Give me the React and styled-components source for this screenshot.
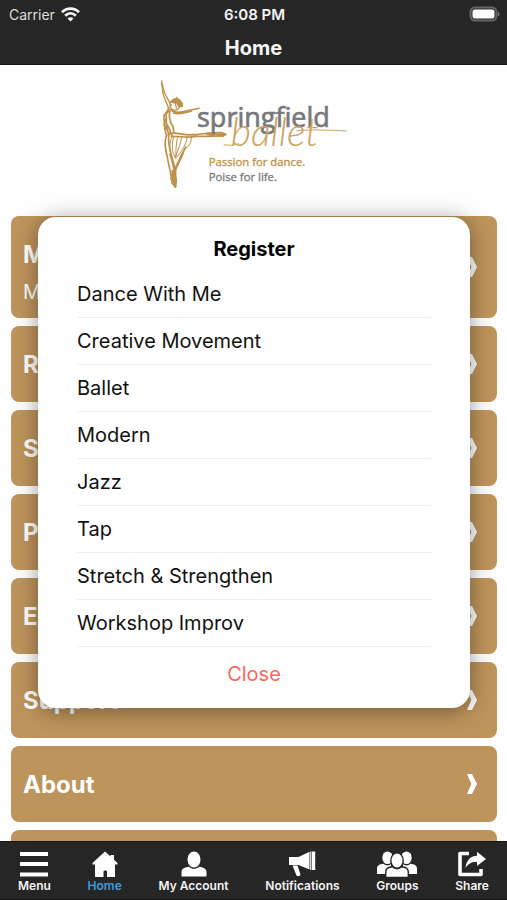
import React from "react";
import styled, { createGlobalStyle } from "styled-components";

const GlobalStyle = createGlobalStyle`
  * { box-sizing: border-box; }
  body {
    margin: 0;
    background: #fefefe;
    font-family: Inter, "Liberation Sans", sans-serif;
  }
  button { font: inherit; border: 0; background: none; padding: 0; cursor: pointer; }
`;

const Screen = styled.div`
  position: relative;
  height: 100vh;
  display: flex;
  flex-direction: column;
  overflow: hidden;
`;

const Header = styled.header`
  flex: none;
  background: #262626;
  color: #f6f6f6;
  border-bottom: 1px solid #161616;
`;

const StatusBar = styled.div`
  display: grid;
  grid-template-columns: 1fr auto 1fr;
  align-items: center;
  height: 28px;
  padding: 0 7px 0 9px;
  font-size: 14px;
`;

const Carrier = styled.div`
  display: flex;
  align-items: center;
  gap: 6px;
  color: #dedede;
`;

const Clock = styled.time`
  font-size: 15px;
  font-weight: 600;
`;

const BatterySlot = styled.div`
  display: flex;
  justify-content: flex-end;
`;

const PageTitle = styled.h1`
  margin: 0;
  padding-top: 5px;
  height: 36px;
  line-height: 31px;
  font-size: 20px;
  font-weight: 700;
  text-align: center;
`;

const Content = styled.main`
  flex: 1;
  min-height: 0;
  overflow: hidden;
  padding: 10px 10px 0 11px;
`;

const LogoBox = styled.div`
  display: flex;
  justify-content: center;
  height: 141px;
`;

const CardList = styled.div`
  display: flex;
  flex-direction: column;
  gap: 8px;
`;

const Card = styled.button`
  display: flex;
  align-items: center;
  justify-content: space-between;
  width: 100%;
  min-height: ${(p) => (p.$tall ? 102 : 76)}px;
  padding: 0 20px 0 12px;
  border-radius: 8px;
  background: #bd945b;
  color: #fff;
  text-align: left;
`;

const CardText = styled.span`
  display: flex;
  flex-direction: column;
  gap: 8px;
  padding-top: ${(p) => (p.$tall ? 12 : 2)}px;
`;

const CardTitle = styled.span`
  font-size: 24px;
  line-height: 30px;
  font-weight: 700;
`;

const CardNote = styled.span`
  font-size: 20px;
  line-height: 28px;
`;

const Overlay = styled.div`
  position: absolute;
  inset: 0;
  padding: 217px 37px 0 38px;
`;

const Dialog = styled.section`
  padding: 0 39px 8px;
  border-radius: 18px;
  background: #fff;
  box-shadow: 0 3px 22px rgba(0, 0, 0, 0.4);
`;

const DialogTitle = styled.h2`
  margin: 0;
  padding-top: 18px;
  height: 54px;
  line-height: 29px;
  font-size: 20px;
  font-weight: 700;
  text-align: center;
`;

const Options = styled.ul`
  margin: 0;
  padding: 0;
  list-style: none;
`;

const Option = styled.li`
  height: 47px;
  border-bottom: 1px solid #efefef;
`;

const OptionButton = styled.button`
  width: 100%;
  height: 100%;
  font-size: 20px;
  color: #111;
  text-align: left;
`;

const CloseButton = styled.button`
  display: block;
  width: 100%;
  height: 53px;
  font-size: 20px;
  color: #f4695c;
`;

const TabBar = styled.nav`
  flex: none;
  display: flex;
  justify-content: space-between;
  height: 59px;
  padding: 9px 18px 0;
  background: #262626;
  border-top: 1px solid #161616;
  border-bottom: 1px solid #161616;
`;

const Tab = styled.a`
  display: flex;
  flex-direction: column;
  align-items: center;
  gap: 1px;
  color: ${(p) => (p.$active ? "#3e9bdc" : "#f4f4f4")};
  font-size: 12px;
  line-height: 16px;
  font-weight: 600;
  text-decoration: none;
  white-space: nowrap;
`;

const Chevron = () => (
  <svg width="10" height="20" viewBox="0 0 10 20" aria-hidden="true">
    <path d="M0 0H5L10 10L5 20H0L4.4 10Z" fill="#fff" />
  </svg>
);

const Wifi = () => (
  <svg width="19" height="15" viewBox="0 0 19 15" aria-hidden="true" fill="none" stroke="#f6f6f6" strokeWidth="2.8">
    <path d="M1 5.3C5.8 .4 13.2 .4 18 5.3" />
    <path d="M4.2 8.7C7.3 5.6 11.7 5.6 14.8 8.7" />
    <path d="M9.5 14.5L6.5 11.4C8.2 9.8 10.8 9.8 12.5 11.4Z" fill="#f6f6f6" stroke="none" />
  </svg>
);

const Battery = () => (
  <svg width="31" height="16" viewBox="0 0 31 16" aria-hidden="true">
    <rect x="1.5" y="1.5" width="26" height="13" rx="4.5" fill="#2c2c2c" stroke="#666" strokeWidth="2" />
    <rect x="3.5" y="3.5" width="22" height="9" rx="2.5" fill="#fff" />
    <path d="M29 5.5C31 6.5 31 9.5 29 10.5Z" fill="#777" />
  </svg>
);

const Logo = () => (
  <svg width="210" height="120" viewBox="-2 0 630 360" role="img" aria-label="Springfield Ballet">
    <g fill="none" stroke="#bf9049" strokeLinecap="round" strokeLinejoin="round">
      <path d="M36 18C34 31 41 38 39 52C43 68 51 82 57 100M36 22C40 31 40 42 44 52C50 65 56 76 65 91" strokeWidth="4" />
      <path d="M63 80C58 93 62 104 72 105C82 107 92 98 91 88M66 78C75 78 78 83 80 99" strokeWidth="4" />
      <path d="M66 78C70 69 87 69 91 76L98 86L98 95L87 94L82 84L67 82ZM81 67L85 75M72 74L93 86" fill="#bf9049" strokeWidth="4" />
      <path d="M57 99C54 111 47 114 43 122C44 143 43 164 51 181M61 105C56 127 60 141 71 157L72 173M67 107C86 118 105 109 122 105C132 103 139 103 148 100M72 114C92 121 109 112 125 108" strokeWidth="5" />
      <path d="M48 119C54 130 45 138 53 151C63 160 59 171 67 182M45 132C53 148 51 165 58 180M51 115L61 105M43 149L51 163" strokeWidth="5" />
      <path d="M59 176C81 169 101 183 129 179C156 178 184 172 216 173L229 178L220 183C190 183 166 185 136 184C116 190 88 183 65 184" strokeWidth="5" />
      <path d="M172 178L222 179M180 181L213 178M190 176L218 183" strokeWidth="6" />
      <path d="M51 180C44 197 47 225 53 246C57 273 65 295 67 324L77 336L80 316C74 288 70 264 61 238M57 180C54 213 65 238 72 266L77 301" strokeWidth="5" />
      <path d="M73 184C65 205 66 231 77 249M84 184C81 202 77 225 79 244M96 184C94 205 85 224 77 246M112 187C111 205 96 232 78 250M125 186C125 205 118 217 102 222M67 184C60 202 58 218 64 232" strokeWidth="3" />
      <path d="M103 226C98 246 85 266 78 284L77 326M96 238C87 258 79 275 74 294L70 312M108 216L76 280" strokeWidth="5" />
      <path d="M68 298L77 334M65 310L78 322M69 288L75 316" strokeWidth="8" />
    </g>
    <text x="142" y="157" fontFamily="Open Sans" fontSize="81" fill="#77787b" stroke="#77787b" strokeWidth="2">springfield</text>
    <path d="M222 209C238 212 253 211 268 206M440 167C490 163 550 166 591 168" fill="none" stroke="#cda35f" strokeWidth="3" />
    <text x="243" y="213" fontFamily="Lato" fontStyle="italic" fontWeight="300" fontSize="118" fill="#cda35f">ballet</text>
    <text x="177" y="273" fontFamily="Open Sans" fontSize="34" fill="#c2924b" stroke="#c2924b">Passion for dance.</text>
    <text x="177" y="317" fontFamily="Open Sans" fontSize="34" fill="#7b7c7e" stroke="#7b7c7e">Poise for life.</text>
  </svg>
);

const MenuIcon = () => (
  <svg width="30" height="26" viewBox="0 0 30 26" aria-hidden="true" fill="#fff">
    <rect x="1" y="1" width="28" height="4" />
    <rect x="1" y="11" width="28" height="4" />
    <rect x="1" y="21.5" width="28" height="4" />
  </svg>
);

const HomeIcon = () => (
  <svg width="26" height="26" viewBox="0 0 26 26" aria-hidden="true">
    <path d="M13 .5L18.5 5.5V4H22V8.7L25.5 12V13.5H23V26H15V20.5C15 19 11.5 19 11.5 20.5V26H3V13.5H.5V12Z" fill="#fff" />
  </svg>
);

const AccountIcon = () => (
  <svg width="26" height="26" viewBox="0 0 26 26" aria-hidden="true" fill="#fff">
    <ellipse cx="13" cy="8.5" rx="6.5" ry="8" />
    <path d="M.5 25.5V21C.5 17.6 4 16.2 8 15.8C11 18.5 15 18.5 18 15.8C22 16.2 25.5 17.6 25.5 21V25.5Z" />
  </svg>
);

const MegaphoneIcon = () => (
  <svg width="28" height="26" viewBox="0 0 28 26" aria-hidden="true" fill="#fff">
    <path d="M1 6H10.5L21.5 .8V18.5L10.5 14H1ZM4.5 14.5H9.5L12.5 23.5C12 25.3 9.5 25.8 8.5 24.5Z" />
    <rect x="22.2" y=".5" width="1.2" height="18.5" />
    <rect x="24" y=".5" width="3.2" height="18.5" />
  </svg>
);

const GroupIcon = () => (
  <svg width="42" height="26" viewBox="0 0 42 26" aria-hidden="true" fill="#fff">
    <ellipse cx="11.5" cy="6.8" rx="5.2" ry="6.3" />
    <ellipse cx="30.5" cy="6.8" rx="5.2" ry="6.3" />
    <path d="M1 23V17.5C1 14.5 4 13 7.5 12.8C10 15 13 14.7 15 13.2V23ZM27 23V13.2C29 14.7 32 15 34.5 12.8C38 13 41 14.5 41 17.5V23Z" />
    <g stroke="#262626" strokeWidth="1.4">
      <path d="M9.7 26.4V21C9.7 17.5 12.8 16 16.4 15.8C19 18.4 23 18.4 25.6 15.8C29.2 16 32.3 17.5 32.3 21V26.4Z" />
      <ellipse cx="21" cy="9.5" rx="6.2" ry="7.6" />
    </g>
  </svg>
);

const ShareIcon = () => (
  <svg width="30" height="26" viewBox="0 0 30 26" aria-hidden="true">
    <path d="M12 2.5H3V23.5H24V18" fill="none" stroke="#fff" strokeWidth="3.6" strokeLinejoin="round" />
    <path d="M20 .8L29 8L20 15V11C14.5 10.8 11.5 12.5 8.5 17C9.3 9.5 13 5.2 20 4.8Z" fill="#fff" />
  </svg>
);

const cards = [
  { title: "Mission", note: "More" },
  { title: "Register" },
  { title: "Schedule" },
  { title: "Programs" },
  { title: "Events" },
  { title: "Support" },
  { title: "About" },
  { title: "Contact" },
];

const classes = [
  "Dance With Me",
  "Creative Movement",
  "Ballet",
  "Modern",
  "Jazz",
  "Tap",
  "Stretch & Strengthen",
  "Workshop Improv",
];

const tabs = [
  { label: "Menu", Icon: MenuIcon },
  { label: "Home", Icon: HomeIcon, active: true },
  { label: "My Account", Icon: AccountIcon },
  { label: "Notifications", Icon: MegaphoneIcon },
  { label: "Groups", Icon: GroupIcon },
  { label: "Share", Icon: ShareIcon },
];

export default function App() {
  return (
    <Screen>
      <GlobalStyle />
      <Header>
        <StatusBar>
          <Carrier>Carrier <Wifi /></Carrier>
          <Clock>6:08 PM</Clock>
          <BatterySlot><Battery /></BatterySlot>
        </StatusBar>
        <PageTitle>Home</PageTitle>
      </Header>
      <Content>
        <LogoBox><Logo /></LogoBox>
        <CardList>
          {cards.map(({ title, note }) => (
            <Card key={title} $tall={Boolean(note)}>
              <CardText $tall={Boolean(note)}>
                <CardTitle>{title}</CardTitle>
                {note && <CardNote>{note}</CardNote>}
              </CardText>
              <Chevron />
            </Card>
          ))}
        </CardList>
      </Content>
      <TabBar>
        {tabs.map(({ label, Icon, active }) => (
          <Tab key={label} href="#" $active={active}>
            <Icon />
            {label}
          </Tab>
        ))}
      </TabBar>
      <Overlay>
        <Dialog role="dialog" aria-modal="true" aria-labelledby="dialog-title">
          <DialogTitle id="dialog-title">Register</DialogTitle>
          <Options>
            {classes.map((name) => (
              <Option key={name}><OptionButton>{name}</OptionButton></Option>
            ))}
          </Options>
          <CloseButton>Close</CloseButton>
        </Dialog>
      </Overlay>
    </Screen>
  );
}
